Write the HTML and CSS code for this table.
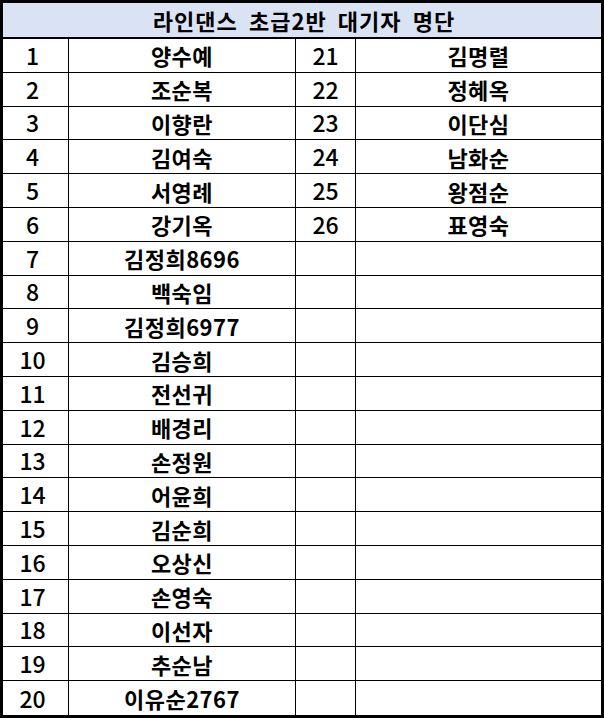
FILE: index.html
```html
<!DOCTYPE html>
<html lang="ko">
<head>
<meta charset="utf-8">
<link rel="stylesheet" href="styles.css">
</head>
<body>
<div class="sheet">
  <div class="title">라인댄스 초급2반 대기자 명단</div>
  <div class="grid">
    <div class="cell num">1</div><div class="cell name">양수예</div><div class="cell num2">21</div><div class="cell name2">김명렬</div>
    <div class="cell num">2</div><div class="cell name">조순복</div><div class="cell num2">22</div><div class="cell name2">정혜옥</div>
    <div class="cell num">3</div><div class="cell name">이향란</div><div class="cell num2">23</div><div class="cell name2">이단심</div>
    <div class="cell num">4</div><div class="cell name">김여숙</div><div class="cell num2">24</div><div class="cell name2">남화순</div>
    <div class="cell num">5</div><div class="cell name">서영례</div><div class="cell num2">25</div><div class="cell name2">왕점순</div>
    <div class="cell num">6</div><div class="cell name">강기옥</div><div class="cell num2">26</div><div class="cell name2">표영숙</div>
    <div class="cell num">7</div><div class="cell name">김정희8696</div><div class="cell num2"></div><div class="cell name2"></div>
    <div class="cell num">8</div><div class="cell name">백숙임</div><div class="cell num2"></div><div class="cell name2"></div>
    <div class="cell num">9</div><div class="cell name">김정희6977</div><div class="cell num2"></div><div class="cell name2"></div>
    <div class="cell num">10</div><div class="cell name">김승희</div><div class="cell num2"></div><div class="cell name2"></div>
    <div class="cell num">11</div><div class="cell name">전선귀</div><div class="cell num2"></div><div class="cell name2"></div>
    <div class="cell num">12</div><div class="cell name">배경리</div><div class="cell num2"></div><div class="cell name2"></div>
    <div class="cell num">13</div><div class="cell name">손정원</div><div class="cell num2"></div><div class="cell name2"></div>
    <div class="cell num">14</div><div class="cell name">어윤희</div><div class="cell num2"></div><div class="cell name2"></div>
    <div class="cell num">15</div><div class="cell name">김순희</div><div class="cell num2"></div><div class="cell name2"></div>
    <div class="cell num">16</div><div class="cell name">오상신</div><div class="cell num2"></div><div class="cell name2"></div>
    <div class="cell num">17</div><div class="cell name">손영숙</div><div class="cell num2"></div><div class="cell name2"></div>
    <div class="cell num">18</div><div class="cell name">이선자</div><div class="cell num2"></div><div class="cell name2"></div>
    <div class="cell num">19</div><div class="cell name">추순남</div><div class="cell num2"></div><div class="cell name2"></div>
    <div class="cell num last">20</div><div class="cell name last">이유순2767</div><div class="cell num2 last"></div><div class="cell name2 last"></div>
  </div>
</div>
</body>
</html>
```
FILE: styles.css
```css
html, body {
  margin: 0;
  padding: 0;
  background: #ffffff;
}
.sheet {
  box-sizing: border-box;
  width: 604px;
  height: 718px;
  border: 3px solid #000;
  display: flex;
  flex-direction: column;
  font-family: "Noto Sans CJK KR", "Noto Sans", sans-serif;
  color: #000;
}
.title {
  box-sizing: border-box;
  height: 36px;
  flex: none;
  background: #dae3f3;
  border-bottom: 2px solid #000;
  display: flex;
  align-items: center;
  justify-content: center;
  font-size: 22px;
  font-weight: 700;
  letter-spacing: 1px;
  word-spacing: 4px;
  padding-left: 4px;
  line-height: 1;
}
.grid {
  flex: 1;
  display: grid;
  grid-template-columns: 66px 227px 60px 1fr;
  grid-template-rows: repeat(20, 1fr);
}
.cell {
  box-sizing: border-box;
  border-bottom: 1px solid #000;
  display: flex;
  align-items: center;
  justify-content: center;
  font-size: 22px;
  font-weight: 700;
  line-height: 1;
  min-height: 0;
}
.name, .name2 {
  letter-spacing: 0.5px;
}
.num, .num2 {
  font-weight: 500;
  font-size: 23px;
}
.num, .name, .num2 {
  border-right: 1px solid #000;
}
.num {
  padding-right: 6px;
}
.last {
  border-bottom: none;
}
```
